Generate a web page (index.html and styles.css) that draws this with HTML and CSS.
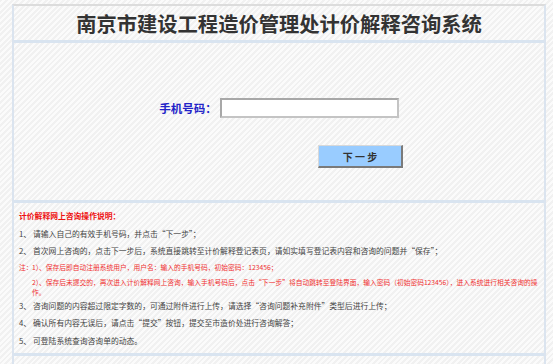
FILE: index.html
```html
<!DOCTYPE html>
<html>
<head>
    <meta charset="utf-8">
    <link rel="stylesheet" href="styles.css">
</head>
<body>
    <div class="frame">
        <div class="title">南京市建设工程造价管理处计价解释咨询系统</div>

        <form class="login" id="loginForm">
            <div class="field-row">
                <label for="phone">手机号码：</label>
                <input type="text" id="phone">
            </div>
            <div class="btn-row">
                <button type="submit">下 一 步</button>
            </div>
        </form>

        <div class="guide">
            <div class="guide-title">计价解释网上咨询操作说明：</div>
            <div class="item"><span class="num">1、</span>请输入自己的有效手机号码，并点击“下一步”；</div>
            <div class="item"><span class="num">2、</span>首次网上咨询的，点击下一步后，系统直接跳转至计价解释登记表页，请如实填写登记表内容和咨询的问题并“保存”；</div>
            <div class="note">
                <span class="note-head">注：</span>
                <div class="note-body">
                    <div>1）、保存后即自动注册系统用户，用户名：输入的手机号码，初始密码：123456；</div>
                    <div class="note-2">2）、保存后未提交的，再次进入计价解释网上咨询，输入手机号码后，点击“下一步”将自动跳转至登陆界面，输入密码（初始密码123456），进入系统进行相关咨询的操作。</div>
                </div>
            </div>
            <div class="item"><span class="num">3、</span>咨询问题的内容超过限定字数的，可通过附件进行上传，请选择“咨询问题补充附件”类型后进行上传；</div>
            <div class="item"><span class="num">4、</span>确认所有内容无误后，请点击“提交”按钮，提交至市造价处进行咨询解答；</div>
            <div class="item"><span class="num">5、</span>可登陆系统查询咨询单的动态。</div>
        </div>
        <div class="foot"></div>
    </div>

    <script>
        document.getElementById('loginForm').addEventListener('submit', function(event) {
            event.preventDefault();
        });
    </script>
</body>
</html>
```

FILE: styles.css
```css
body {
    margin: 0;
    font-family: "Noto Sans CJK SC", "Noto Sans", sans-serif;
    background: repeating-linear-gradient(135deg, #f1f1f1 0px, #f1f1f1 2px, #fbfbfb 2px, #fbfbfb 4px);
    color: #333;
}
.frame {
    margin: 4px 7px 0 12px;
    border: 2px solid #dbe4ef;
    border-top-color: #dcdcdc;
    border-bottom: none;
    height: 400px;
}
.title {
    height: 34px;
    line-height: 34px;
    text-align: center;
    font-size: 20.3px;
    font-weight: bold;
    color: #333;
    border-bottom: 3px solid #d9e4f0;
}
.login {
    padding: 55px 0 32px;
    border-bottom: 3px solid #d9e4f0;
}
.field-row {
    display: flex;
    justify-content: center;
    align-items: center;
    gap: 3px;
}
.field-row label {
    font-size: 11.5px;
    font-weight: bold;
    color: #2323c8;
}
.field-row input {
    width: 175px;
    height: 16px;
    padding: 0;
    border: 2px solid #c4c4c4;
    border-top-color: #a8a8a8;
    border-left-color: #a8a8a8;
    background: #fff;
}
.btn-row {
    display: flex;
    padding: 27px 0 0 304px;
}
.btn-row button {
    width: 85px;
    height: 23px;
    padding: 0;
    background: #99ccff;
    border: 1px solid #d8d8d8;
    border-right: 2px solid #7a7a7a;
    border-bottom: 2px solid #7a7a7a;
    font-family: inherit;
    font-size: 10px;
    font-weight: bold;
    color: #333;
}
.guide {
    padding: 4px 0 0 5px;
    font-size: 7.8px;
    color: #444;
}
.guide-title {
    line-height: 17.5px;
    font-weight: bold;
    color: #ee1111;
}
.item {
    line-height: 17.5px;
}
.num {
    display: inline-block;
    width: 14px;
}
.note {
    display: flex;
    margin: 2px 0 0;
    font-size: 6.75px;
    line-height: 10px;
    color: #f03030;
}
.note-head {
    width: 13px;
    flex: none;
}
.note-2 {
    margin-top: 5px;
}
.foot {
    margin-top: 4px;
    border-top: 3px solid #d9e4f0;
}
```
